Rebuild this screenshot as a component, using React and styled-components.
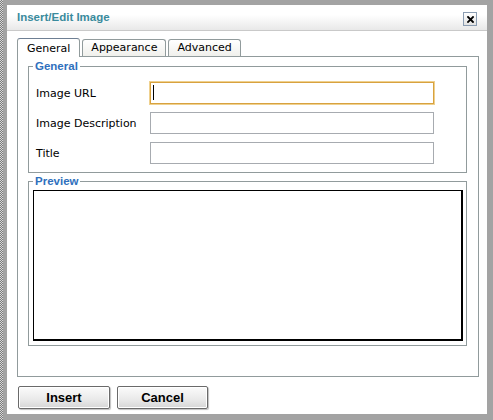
import React from 'react'
import styled, { createGlobalStyle } from 'styled-components'

const GlobalStyle = createGlobalStyle`
    html, body {
        margin: 0;
        padding: 0;
    }
    body {
        width: 493px;
        height: 420px;
        overflow: hidden;
        background:
            linear-gradient(#a3a3a3, #a3a3a3) 3px 0 / 100% 100% no-repeat,
            repeating-conic-gradient(#7a7a7a 0 25%, #d8d8d8 0 50%) 0 0 / 2px 2px;
        font-family: "DejaVu Sans", Verdana, sans-serif;
    }
`

const Frame = styled.div`
    padding: 5px 6px 6px 7px;
`

const Dialog = styled.div`
    width: 480px;
    height: 409px;
    background: #fff;
    display: flex;
    flex-direction: column;
    box-sizing: border-box;
`

const TitleBar = styled.div`
    height: 25px;
    display: flex;
    align-items: center;
    justify-content: space-between;
    padding: 0 10px 0 10px;
    background: linear-gradient(#ffffff, #ffffff 40%, #e8e8e8);
    border-bottom: 1px solid #c9c9c9;
`

const Title = styled.span`
    font-family: "Liberation Sans", Arial, sans-serif;
    font-weight: bold;
    font-size: 11.5px;
    color: #3a8b9d;
    margin-top: -2px;
`

const CloseButton = styled.button`
    width: 14px;
    height: 14px;
    margin-top: 3px;
    padding: 0;
    border: 1px solid #8b9db2;
    background: linear-gradient(#ffffff, #e2e2e2);
    display: flex;
    align-items: center;
    justify-content: center;
    box-sizing: border-box;
`

const Content = styled.div`
    padding: 7px 8px 0 10px;
`

const TabRow = styled.div`
    display: flex;
    align-items: flex-end;
    height: 18px;
    position: relative;
    z-index: 1;
`

const Tab = styled.div`
    height: ${props => props.$active ? '19px' : '17px'};
    margin-right: ${props => props.$last ? '0' : '2px'};
    margin-bottom: ${props => props.$active ? '-1px' : '0'};
    padding: 0 ${props => props.$active ? '9px' : '8px'};
    box-sizing: border-box;
    border: 1px solid #919b9c;
    border-bottom: none;
    border-top-color: ${props => props.$active ? '#6e7f93' : '#919b9c'};
    border-radius: 3px 3px 0 0;
    background: ${props => props.$active ? '#fff' : 'linear-gradient(#ffffff, #f0f0ec)'};
    font-size: 11px;
    line-height: ${props => props.$active ? '19px' : '16px'};
    color: #000;
    white-space: nowrap;
`

const Panel = styled.div`
    height: 321px;
    box-sizing: border-box;
    border: 1px solid #919b9c;
    padding: 3px 11px 0 10px;
`

const FieldSet = styled.fieldset`
    margin: ${props => props.$gap ? '2px' : '0'} 0 0 0;
    padding: ${props => props.$tight ? '3px 3px 4px 4px' : '6px 4px 4px 4px'};
    border: 1px solid #919b9c;
    min-width: 0;
`

const Legend = styled.legend`
    padding: 0 2px;
    font-family: "Liberation Sans", Arial, sans-serif;
    font-weight: bold;
    font-size: 11.5px;
    line-height: 12px;
    color: #2f70bd;
`

const FormGrid = styled.div`
    display: grid;
    grid-template-columns: 114px 284px;
    grid-auto-rows: 30px;
    align-items: center;
    margin-left: 3px;
`

const Label = styled.label`
    font-size: 11px;
    color: #000;
`

const TextInput = styled.input`
    width: 284px;
    height: 22px;
    box-sizing: border-box;
    margin: 0;
    padding: 0 2px;
    font-family: "DejaVu Sans", Verdana, sans-serif;
    font-size: 11px;
    border: 1px solid ${props => props.$focused ? '#d8a23f' : '#a7abb0'};
    box-shadow: ${props => props.$focused ? '0 0 0 1px #efd18f' : 'none'};
    background: ${props => props.$focused
        ? 'linear-gradient(#000, #000) 2px 2px / 1px 15px no-repeat, #fff'
        : '#fff'};
    outline: none;
`

const PreviewBox = styled.div`
    height: 151px;
    box-sizing: border-box;
    border: 1px solid #000;
    border-right-width: 2px;
    border-bottom-width: 2px;
    background: #fff;
`

const Footer = styled.div`
    display: flex;
    gap: 7px;
    margin: 9px 0 0 1px;
`

const Button = styled.button`
    width: ${props => props.$width || 91}px;
    height: 23px;
    padding: 0;
    box-sizing: border-box;
    border: 1px solid #6a6a6a;
    border-radius: 2px;
    background: linear-gradient(#fbfbfb, #e9e9e9 60%, #d6d6d6);
    box-shadow: inset 0 0 0 1px #ffffff, 1px 1px 1px rgba(0, 0, 0, 0.25);
    font-family: "Liberation Sans", Arial, sans-serif;
    font-weight: bold;
    font-size: 13px;
    color: #000;
`

const CloseIcon = () => (
    <svg width="7" height="7" viewBox="0 0 7 7">
        <path d="M1 1 L6 6 M6 1 L1 6" stroke="#000" strokeWidth="1.8" strokeLinecap="square" />
    </svg>
)

const App = () => {
    return (
        <Frame>
            <GlobalStyle />
            <Dialog>
                <TitleBar>
                    <Title>Insert/Edit Image</Title>
                    <CloseButton aria-label="Close"><CloseIcon /></CloseButton>
                </TitleBar>
                <Content>
                    <TabRow>
                        <Tab $active>General</Tab>
                        <Tab>Appearance</Tab>
                        <Tab $last>Advanced</Tab>
                    </TabRow>
                    <Panel>
                        <FieldSet>
                            <Legend>General</Legend>
                            <FormGrid>
                                <Label>Image URL</Label>
                                <TextInput $focused readOnly />
                                <Label>Image Description</Label>
                                <TextInput readOnly />
                                <Label>Title</Label>
                                <TextInput readOnly />
                            </FormGrid>
                        </FieldSet>
                        <FieldSet $gap $tight>
                            <Legend>Preview</Legend>
                            <PreviewBox />
                        </FieldSet>
                    </Panel>
                    <Footer>
                        <Button $width={92}>Insert</Button>
                        <Button>Cancel</Button>
                    </Footer>
                </Content>
            </Dialog>
        </Frame>
    )
}

export default App
